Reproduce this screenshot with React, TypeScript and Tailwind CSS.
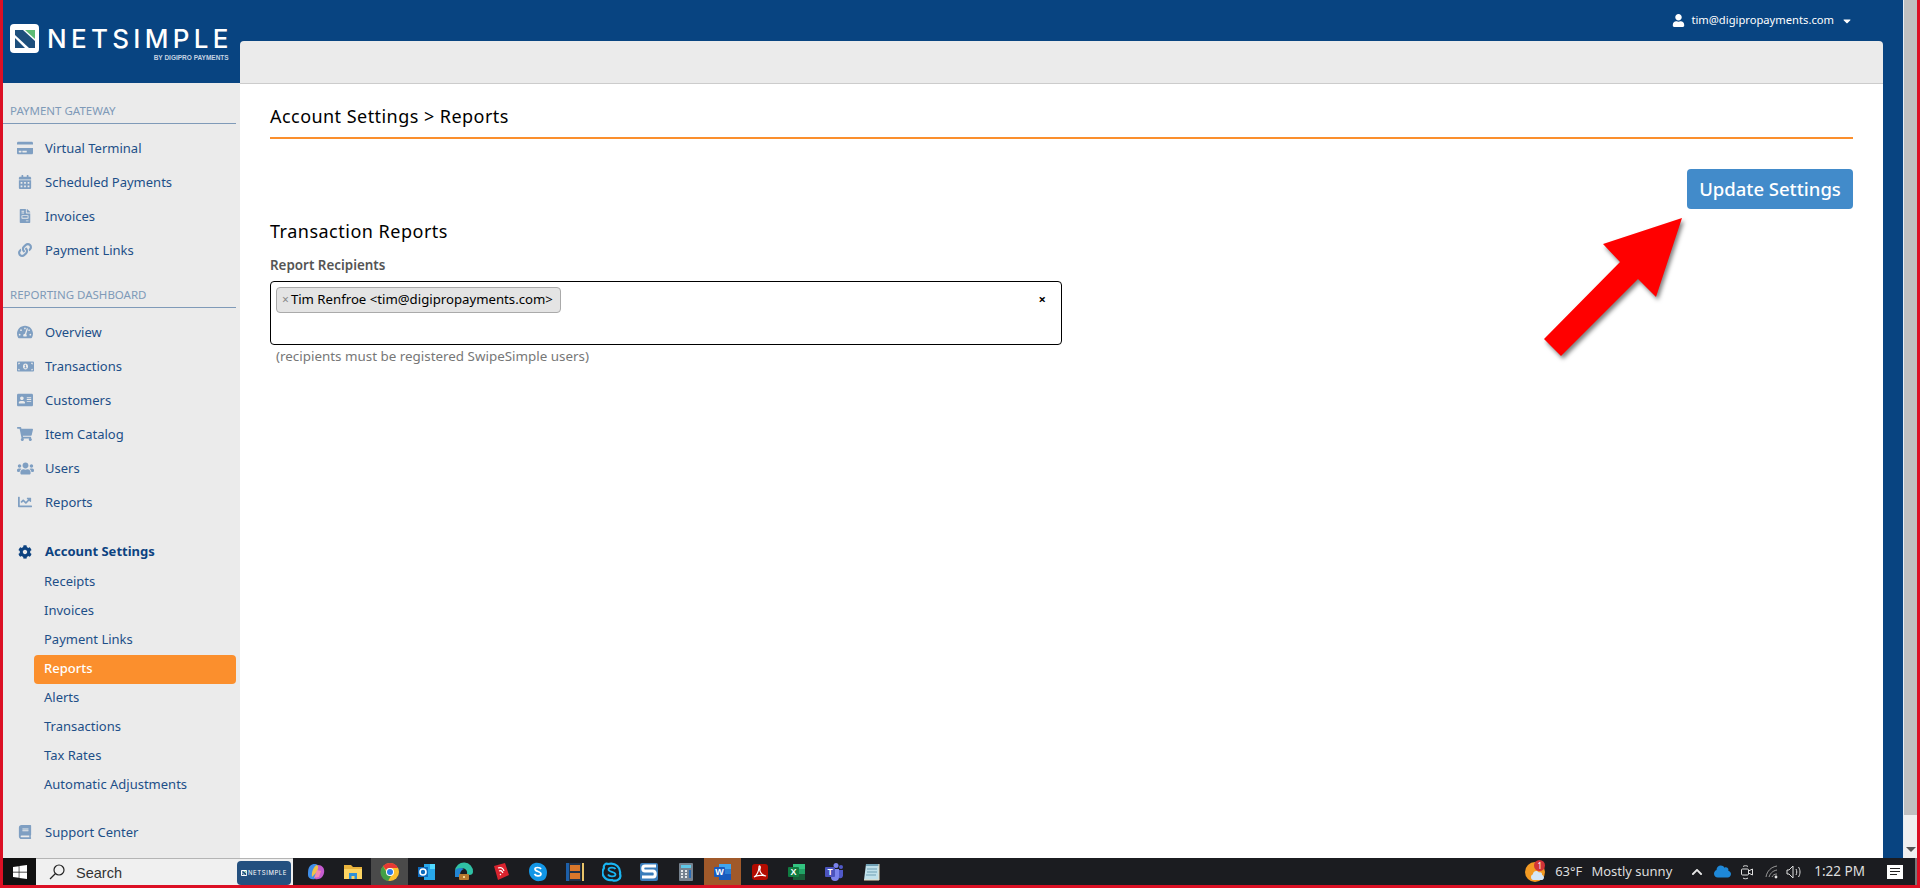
import type { ReactNode } from 'react';
import {
  FaCreditCard, FaCalendarAlt, FaFileInvoice, FaLink, FaTachometerAlt, FaMoneyBillAlt,
  FaAddressCard, FaShoppingCart, FaUsers, FaChartLine, FaCog, FaBook, FaUser, FaCaretDown,
  FaWindows, FaChevronUp, FaCloud,
} from 'react-icons/fa';

const gatewayLinks = [
  { label: 'Virtual Terminal', icon: <FaCreditCard size={16} /> },
  { label: 'Scheduled Payments', icon: <FaCalendarAlt size={14} /> },
  { label: 'Invoices', icon: <FaFileInvoice size={14} /> },
  { label: 'Payment Links', icon: <FaLink size={14} /> },
];

const reportingLinks = [
  { label: 'Overview', icon: <FaTachometerAlt size={16} /> },
  { label: 'Transactions', icon: <FaMoneyBillAlt size={17} /> },
  { label: 'Customers', icon: <FaAddressCard size={16} /> },
  { label: 'Item Catalog', icon: <FaShoppingCart size={16} /> },
  { label: 'Users', icon: <FaUsers size={17} /> },
  { label: 'Reports', icon: <FaChartLine size={14} /> },
];

const settingsLinks = ['Receipts', 'Invoices', 'Payment Links', 'Reports', 'Alerts', 'Transactions', 'Tax Rates', 'Automatic Adjustments'];

function SectionLabel({ children }: { children: ReactNode }) {
  return (
    <div className="h-[41px] mr-[4px] pl-[7px] pb-[4px] flex items-end border-b border-[#7f9ab8] text-[#7f9ab8] text-[11.5px] leading-[16px]">
      {children}
    </div>
  );
}

function NavRow({ label, icon }: { label: string; icon: ReactNode }) {
  return (
    <div className="h-[34px] flex items-center text-[13px] text-[#1d4f88]">
      <span className="w-[44px] flex justify-center text-[#7f9fc2]">{icon}</span>
      <span className="-ml-[2px] pt-[1px]">{label}</span>
    </div>
  );
}

function LogoMark({ size = 29 }: { size?: number }) {
  return (
    <svg width={size} height={size} viewBox="0 0 29 29">
      <rect width="29" height="29" rx="4" fill="#fff" />
      <path d="M5 6h8l12 11v7h-6L5 11z" fill="#1d4f7c" />
      <path d="M15 6h10v9z" fill="#5dbb75" />
      <path d="M5 14l10 10H5z" fill="#1d4f7c" />
    </svg>
  );
}

function Sidebar() {
  return (
    <div className="w-[237px] shrink-0 flex flex-col">
      <div className="h-[83px] bg-[#084481] pl-[7px] pt-[24px] flex items-start gap-[8px]">
        <LogoMark />
        <div className="flex flex-col items-end">
          <span className="text-white text-[26px] leading-[30px] font-medium tracking-[4.3px] -mr-[4px] font-['Inter',sans-serif]">NETSIMPLE</span>
          <span className="text-[#c5d3e2] text-[6.5px] leading-[8px] font-bold font-['Liberation_Sans',sans-serif]">BY DIGIPRO PAYMENTS</span>
        </div>
      </div>
      <div className="flex-1 bg-[#ebebeb]">
        <SectionLabel>PAYMENT GATEWAY</SectionLabel>
        <div className="pt-[7px]">
          {gatewayLinks.map((link) => <NavRow key={link.label} {...link} />)}
        </div>
        <SectionLabel>REPORTING DASHBOARD</SectionLabel>
        <div className="pt-[7px]">
          {reportingLinks.map((link) => <NavRow key={link.label} {...link} />)}
        </div>
        <div className="mt-[15px] h-[34px] pt-[1px] flex items-center text-[13px] font-bold text-[#0d4381]">
          <span className="w-[44px] flex justify-center"><FaCog size={14} /></span>
          <span className="-ml-[2px]">Account Settings</span>
        </div>
        {settingsLinks.map((item, i) => (
          <div
            key={item + i}
            className={`h-[29px] ml-[31px] mr-[4px] pl-[10px] pb-[2px] flex items-center text-[13px] rounded-[4px] ${
              item === 'Reports' ? 'bg-[#fb8f2d] text-white font-medium' : 'text-[#1d4f88]'
            }`}
          >
            {item}
          </div>
        ))}
        <div className="mt-[15px]">
          <NavRow label="Support Center" icon={<FaBook size={14} />} />
        </div>
      </div>
    </div>
  );
}

function Content() {
  return (
    <div className="flex-1 bg-white px-[30px] flex flex-col">
      <div className="h-[55px] pb-[9px] flex items-end border-b-2 border-[#fb8f2d] text-[18px] tracking-[0.45px] leading-[24px] text-black">
        Account Settings &gt; Reports
      </div>
      <button className="self-end mt-[30px] h-[40px] w-[166px] rounded-[4px] bg-[#428bca] text-white text-[18.5px] font-medium">
        Update Settings
      </button>
      <div className="mt-[9px] h-[26px] flex items-center text-[18px] tracking-[0.5px] text-black">Transaction Reports</div>
      <div className="mt-[11px] h-[20px] flex items-center text-[13.4px] font-semibold text-[#555]">Report Recipients</div>
      <div className="mt-[6px] w-[792px] h-[64px] rounded-[4px] border border-black p-[5px] flex items-start justify-between">
        <div className="h-[26px] w-[285px] rounded-[4px] border border-[#aaa] bg-[#e4e4e4] px-[5px] flex items-center text-[13.2px] text-black whitespace-nowrap">
          <span className="text-[#888] mr-[2px] text-[12px]">×</span>Tim Renfroe &lt;tim@digipropayments.com&gt;
        </div>
        <span className="text-[13px] leading-[24px] font-bold text-black mr-[10px]">×</span>
      </div>
      <div className="mt-[1px] pl-[6px] text-[13.4px] leading-[20px] text-[#777]">(recipients must be registered SwipeSimple users)</div>
    </div>
  );
}

// small task bar glyphs, 20x20 box
const taskbarIcons: ReactNode[] = [
  <svg key="copilot" width="20" height="20" viewBox="0 0 20 20">
    <path d="M4 4c3-3 6-2 8-1l-3 14c-4 1-7-1-7-4 0-4 0-7 2-9z" fill="#3f8ee8" />
    <path d="M12 3c4 0 7 3 6 8-1 4-4 7-9 6z" fill="#c65bd0" />
    <path d="M6 15c-1-5 2-11 5-12 2 1 1 4 0 7z" fill="#f0c24b" />
    <path d="M11 8l4 1-2 6-5 1z" fill="#f48ab0" />
  </svg>,
  <svg key="folder" width="20" height="20" viewBox="0 0 20 20">
    <path d="M1 3h7l2 2h9v12H1z" fill="#e9b33c" />
    <path d="M1 7h18v10H1z" fill="#fcd462" />
    <path d="M6 17v-6h8v6h-2.5v-3h-3v3z" fill="#2e90d8" />
  </svg>,
  <svg key="chrome" width="20" height="20" viewBox="0 0 20 20">
    <circle cx="10" cy="10" r="9" fill="#fbc02d" />
    <path d="M10 1a9 9 0 0 1 8 5h-8a4 4 0 0 0-4 2L3 4a9 9 0 0 1 7-3z" fill="#e53935" />
    <path d="M3 4l4 7a4 4 0 0 0 4 3l-3 5A9 9 0 0 1 3 4z" fill="#43a047" />
    <circle cx="10" cy="10" r="4" fill="#fff" />
    <circle cx="10" cy="10" r="3" fill="#2b7de9" />
  </svg>,
  <svg key="outlook" width="20" height="20" viewBox="0 0 20 20">
    <path d="M7 2h11v16H7z" fill="#28a8ea" />
    <path d="M13 2h5v5h-5z" fill="#50d9ff" />
    <path d="M1 5h10v10H1z" fill="#0f6cbd" />
    <circle cx="6" cy="10" r="3" fill="none" stroke="#fff" strokeWidth="1.6" />
  </svg>,
  <svg key="edge" width="20" height="20" viewBox="0 0 20 20">
    <path d="M1 9a9 9 0 0 1 18 1c0 3-4 4-6 2 1-4-3-7-7-5-2 1-4 2-5 2z" fill="#2fc1a5" />
    <path d="M1 9c1-3 6-4 9-2-3 1-5 4-3 8H1z" fill="#2385d4" />
    <rect x="5" y="12" width="10" height="6" rx="1" fill="#b97a2f" />
    <rect x="9" y="14" width="2" height="2" fill="#f6d48a" />
  </svg>,
  <svg key="sketchup" width="20" height="20" viewBox="0 0 20 20">
    <path d="M3 4l11-3 4 12-11 5z" fill="#d9232e" />
    <path d="M7 6c3-1 5 0 6 3M8 9c2-1 3 0 4 2M9 12l1 1" stroke="#fff" strokeWidth="1.2" fill="none" />
  </svg>,
  <svg key="skype-s" width="20" height="20" viewBox="0 0 20 20">
    <path d="M7 1c7-1 12 4 12 9s-2 9-7 9C6 20 1 15 1 9c0-4 2-7 6-8z" fill="#1296e6" />
    <path d="M13 7c-1-2-6-2-6 0 0 3 6 2 6 5 0 2-5 3-6.500 0" stroke="#fff" strokeWidth="1.7" fill="none" />
  </svg>,
  <svg key="film" width="20" height="20" viewBox="0 0 20 20">
    <rect x="1" y="1" width="3" height="18" fill="#1d5fa8" />
    <rect x="4" y="1" width="12" height="18" fill="#20324a" />
    <rect x="5" y="3" width="10" height="6" fill="#d9772b" />
    <rect x="5" y="11" width="10" height="6" fill="#d9772b" />
    <rect x="17" y="1" width="2" height="18" fill="#e8c46a" />
  </svg>,
  <svg key="skype" width="20" height="20" viewBox="0 0 20 20">
    <path d="M6 2c8-2 13 4 12 10 2 5-4 8-8 6C3 19-2 12 2 6c-1-3 2-5 4-4z" fill="none" stroke="#19b5f1" strokeWidth="2.200" />
    <path d="M13.500 7c-1-2-7-2-7 .5 0 3 7 1.500 7 5 0 2-6 3-7.500 0" stroke="#19b5f1" strokeWidth="1.800" fill="none" />
  </svg>,
  <svg key="snagit" width="20" height="20" viewBox="0 0 20 20">
    <rect x="1" y="1" width="18" height="18" rx="2" fill="#3a7dbb" />
    <path d="M17 4H6C3 4 3 9 6 9h8c3 0 3 6 0 6H3" stroke="#fff" strokeWidth="3" fill="none" />
  </svg>,
  <svg key="calc" width="20" height="20" viewBox="0 0 20 20">
    <rect x="3" y="1" width="14" height="18" rx="1" fill="#76828f" />
    <rect x="5" y="3" width="10" height="3" fill="#5fc8e8" />
    <path d="M5 8h2v2H5zM9 8h2v2H9zM5 11h2v2H5zM9 11h2v2H9zM5 14h2v2H5zM9 14h2v2H9z" fill="#e3e7ea" />
    <rect x="13" y="8" width="2" height="8" fill="#2b6cb5" />
  </svg>,
  <svg key="word" width="20" height="20" viewBox="0 0 20 20">
    <path d="M6 2h12v5H6z" fill="#41a5ee" />
    <path d="M6 7h12v5H6z" fill="#2b7cd3" />
    <path d="M6 12h12v6H6z" fill="#185abd" />
    <rect x="1" y="5" width="11" height="10" rx="1" fill="#1a5cc0" />
    <text x="6.500" y="13" textAnchor="middle" fontSize="9" fontWeight="700" fill="#fff" fontFamily="Liberation Sans">W</text>
  </svg>,
  <svg key="acrobat" width="20" height="20" viewBox="0 0 20 20">
    <rect x="2" y="2" width="16" height="16" rx="3" fill="#b30b00" />
    <path d="M4 15c3-1 5-7 5-10 0-2 2-1 1 2-1 3 3 7 6 7-2-1-9-1-12 1z" stroke="#fff" strokeWidth="1.200" fill="none" />
  </svg>,
  <svg key="excel" width="20" height="20" viewBox="0 0 20 20">
    <path d="M6 2h12v5H6z" fill="#33c481" />
    <path d="M6 7h12v5H6z" fill="#21a366" />
    <path d="M6 12h12v6H6z" fill="#185c37" />
    <rect x="1" y="5" width="11" height="10" rx="1" fill="#107c41" />
    <text x="6.500" y="13" textAnchor="middle" fontSize="9" fontWeight="700" fill="#fff" fontFamily="Liberation Sans">X</text>
  </svg>,
  <svg key="teams" width="20" height="20" viewBox="0 0 20 20">
    <circle cx="12" cy="3.500" r="2.500" fill="#7b83eb" />
    <circle cx="17" cy="5" r="2" fill="#5059c9" />
    <path d="M7 7h8v8a4 4 0 0 1-8 0z" fill="#7b83eb" />
    <path d="M15 8h4v6a3 3 0 0 1-4 2z" fill="#5059c9" />
    <rect x="1" y="5" width="10" height="10" rx="1" fill="#4b53bc" />
    <text x="6" y="13" textAnchor="middle" fontSize="8.500" fontWeight="700" fill="#fff" fontFamily="Liberation Sans">T</text>
  </svg>,
  <svg key="notepad" width="20" height="20" viewBox="0 0 20 20">
    <path d="M5 2h13v16H3z" fill="#bfe0ea" />
    <path d="M5 2h13v2H5z" fill="#6f9fb3" />
    <path d="M6 7h10M6 10h10M5 13h10" stroke="#6f9fb3" strokeWidth="1" />
    <path d="M18 2v16H3" stroke="#e7dcc0" strokeWidth="1" fill="none" />
  </svg>,
];

function Taskbar() {
  return (
    <div className="h-[27px] shrink-0 bg-[#1b1c20] flex items-center text-[#dedede] text-[13px]">
      <div className="w-[33px] h-full bg-[#111] flex items-center justify-center text-white">
        <FaWindows size={16} />
      </div>
      <div className="w-[257px] h-full bg-[#f0f0f0] border-t border-[#b4b4b4] flex items-center justify-between text-[#333]">
        <div className="flex items-center pl-[12px]">
          <svg width="18" height="18" viewBox="0 0 18 18" fill="none" stroke="#222" strokeWidth="1.200">
            <circle cx="11" cy="7" r="5" />
            <path d="M7.500 10.500L2 16" />
          </svg>
          <span className="ml-[10px] mt-[3px] text-[14.500px] font-['Liberation_Sans',sans-serif]">Search</span>
        </div>
        <div className="w-[54px] h-[24px] mt-[1px] mr-[2px] bg-[#24507f] rounded-[4px] flex items-center justify-center gap-[1px]">
          <LogoMark size={6} />
          <span className="text-white text-[6px] tracking-[0.6px] font-['Inter',sans-serif]">NETSIMPLE</span>
        </div>
      </div>
      <div className="ml-[4px] flex h-full">
        {taskbarIcons.map((icon, i) => (
          <div
            key={i}
            className={`w-[37px] h-full flex items-center justify-center ${i === 2 ? 'bg-[#4a4a4a]' : ''} ${i === 11 ? 'bg-[#a0592a]' : ''}`}
          >
            {icon}
          </div>
        ))}
      </div>
      <div className="ml-auto flex items-center h-full">
        <div className="relative w-[20px] h-[20px] rounded-full bg-[#f39a23]">
          <FaCloud size={13} className="absolute left-[6px] top-[7px] text-[#d5e6f5]" />
          <span className="absolute -top-[2px] left-[9px] w-[11px] h-[11px] rounded-full bg-[#d13438] text-white text-[8px] leading-[11px] text-center">1</span>
        </div>
        <span className="ml-[10px] text-[13px]">63°F</span>
        <span className="ml-[9px] text-[13px]">Mostly sunny</span>
        <FaChevronUp size={12} className="ml-[19px] text-[#e6e6e6]" />
        <FaCloud size={17} className="ml-[11px] text-[#1e88d8]" />
        <svg className="ml-[9px]" width="14" height="18" viewBox="0 0 14 18" fill="none" stroke="#e0e0e0" strokeWidth="1">
          <rect x="1.500" y="6" width="7" height="6" rx="1" />
          <path d="M8.500 8l4-2v6l-4-2M3 3.500c1-1 4-1 5 0M3 15c1 1 4 1 5 0" />
        </svg>
        <svg className="ml-[11px]" width="14" height="14" viewBox="0 0 14 14" fill="none" stroke="#9a9a9a" strokeWidth="1">
          <path d="M1 12C2 6 6 2 12 1M4 12c1-3 3-6 8-7M7 12c1-2 2-3 5-3" />
          <circle cx="11" cy="12" r="1.400" fill="#e6e6e6" stroke="none" />
        </svg>
        <svg className="ml-[7px]" width="17" height="16" viewBox="0 0 17 16" fill="none" stroke="#e0e0e0" strokeWidth="1">
          <path d="M1 6h2l4-4v12l-4-4H1zM10 5c1 2 1 4 0 6M12.500 3c2 3 2 7 0 10" />
        </svg>
        <span className="ml-[11px] text-[13.500px]">1:22 PM</span>
        <div className="ml-[22px] mr-[12px] w-[16px] h-[14px] bg-white flex flex-col gap-[2px] justify-center pl-[3px]">
          <span className="block w-[10px] h-[1px] bg-[#222]" />
          <span className="block w-[10px] h-[1px] bg-[#222]" />
          <span className="block w-[7px] h-[1px] bg-[#222]" />
        </div>
        <div className="w-[2px] h-full bg-[#777]" />
      </div>
    </div>
  );
}

export default function App() {
  return (
    <div className="relative w-[1920px] h-[888px] overflow-hidden flex flex-col border-l-[3px] border-r-[3px] border-b-[3px] border-[#dc1024] bg-white font-['Noto_Sans',sans-serif]">
      <div className="flex-1 min-h-0 flex">
        <Sidebar />
        <div className="flex-1 bg-[#084481] pr-[20px] flex flex-col">
          <div className="h-[41px] flex items-center justify-end pr-[30px] gap-[5px] text-white text-[11.2px]">
            <FaUser size={13} />
            <span className="ml-[1px]">tim@digipropayments.com</span>
            <FaCaretDown size={12} className="ml-[2px]" />
          </div>
          <div className="h-[43px] bg-[#ebebeb] rounded-t-[4px] border-b border-[#ccc]" />
          <Content />
        </div>
        <div className="w-[14px] border-l border-[#e8eef4] flex flex-col bg-[#f0f0f0]">
          <div className="h-[815px] bg-[#c0c0c0]" />
          <div className="flex-1 flex items-end justify-center pb-[6px]">
            <span className="block w-0 h-0 border-x-[5px] border-x-transparent border-t-[5px] border-t-[#555]" />
          </div>
        </div>
      </div>
      <Taskbar />
      <svg className="absolute left-[1534px] top-[212px] drop-shadow-[2px_3px_2px_rgba(0,0,0,0.5)]" width="150" height="150" viewBox="1537 212 150 150">
        <path d="M1682 218L1603 244L1620 262L1544 339L1561 356L1638 279L1656 297Z" fill="#ff0000" />
      </svg>
    </div>
  );
}
